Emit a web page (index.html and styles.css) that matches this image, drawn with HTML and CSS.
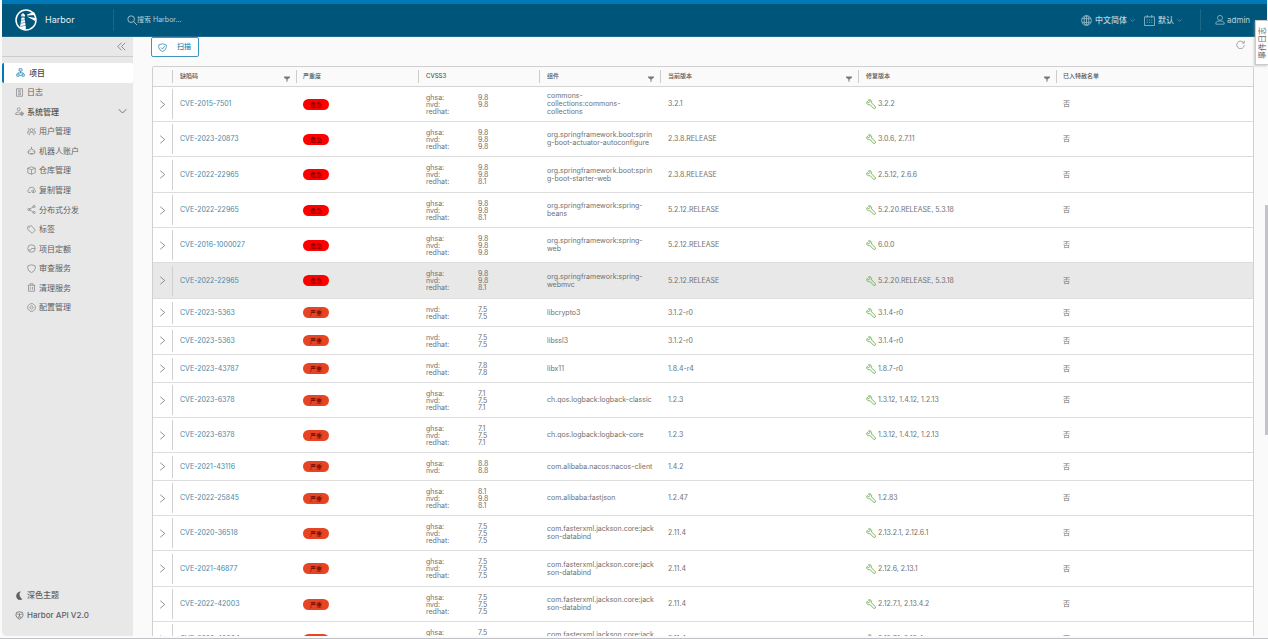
FILE: index.html
```html
<!DOCTYPE html>
<html lang="zh-CN">
<head>
<meta charset="utf-8">
<title>Harbor</title>
<link rel="stylesheet" href="styles.css">
</head>
<body>
<svg class="sprite" aria-hidden="true">
  <symbol id="wrench" viewBox="0 0 36 36"><path d="M4 9C0 16 6 23 14 20L26 32Q30 36 33 33Q36 29 32 26L20 14C22 6 16 1 9 3L14 9L10 14Z"/></symbol>
  <symbol id="filter" viewBox="0 0 12 12"><path d="M0 1h12v2L7 7v4l-2 1V7L0 3z"/></symbol>
  <symbol id="chevron" viewBox="0 0 12 12"><path d="M3 1l6 5-6 5"/></symbol>
  <symbol id="down" viewBox="0 0 12 12"><path d="M1 3l5 5 5-5"/></symbol>
</svg>
<header class="topbar">
  <a class="brand" href="#">
    <svg class="logo" viewBox="0 0 44 44"><circle cx="22" cy="22" r="20"/><path class="solid" d="M12 12l4-4 4 4v3h-8zM13 17h6l3 22-4 3-8-5zM24 11l14-5 3 6-17 1zM24 15l17 3-1 6z"/><path class="gap" d="M12 23l9-2M11 29l11-3M11 35l12-3M14 12v5"/></svg>
    <span>Harbor</span>
  </a>
  <label class="search"><svg class="ico" viewBox="0 0 12 12"><circle cx="5" cy="5" r="4"/><path d="M8 8l4 4"/></svg><input type="text" placeholder="搜索 Harbor..." aria-label="搜索"></label>
  <div class="tools">
    <button class="tool lang"><svg class="ico" viewBox="0 0 12 12"><circle cx="6" cy="6" r="5.3"/><ellipse cx="6" cy="6" rx="2.5" ry="5.3"/><path d="M1 4h10M1 8h10M6 1v10"/></svg>中文简体<svg class="caret"><use href="#down"/></svg></button>
    <button class="tool date"><svg class="ico" viewBox="0 0 12 12"><path d="M.5 2h11v9.500H.5zM3.500 0v3M8.500 0v3M3 5.500h1M5.500 5.500h1M8 5.500h1M3 8h1M5.500 8h1M8 8h1"/></svg>默认<svg class="caret"><use href="#down"/></svg></button>
    <button class="tool user"><svg class="ico" viewBox="0 0 12 12"><circle cx="6" cy="3.500" r="3"/><path d="M1 11V9q2-2 5-2t5 2v2z"/></svg>admin</button>
  </div>
</header>
<div class="shell">
  <aside class="sidebar">
    <button class="collapse" aria-label="收起"><svg viewBox="0 0 12 12"><path d="M6 1L1 6l5 5M11 1L6 6l5 5"/></svg></button>
    <nav class="menu" id="menu"></nav>
    <div class="extras">
      <button class="link"><svg class="ico moon" viewBox="0 0 12 12"><path d="M7 1Q3 5 9 11Q3 13 2 7Q2 2 7 1z"/></svg>深色主题</button>
      <a class="link" href="#"><svg class="ico" viewBox="0 0 12 12"><path d="M2 2q4-2 8 0 2 4-1 7l-3 2-3-2Q0 6 2 2zM3 4l2 1M7 5l2-1M4 8h4M6 3v4"/></svg>Harbor API V2.0</a>
    </div>
  </aside>
  <main class="content">
    <div class="actions">
      <button class="scan"><svg viewBox="0 0 12 12"><path d="M6 1l5 1.500V6q-1 4-5 5.500Q2 10 1 6V2.500zM4 6l2 2 3-4"/></svg>扫描</button>
      <button class="refresh" aria-label="刷新"><svg viewBox="0 0 12 12"><path d="M10 3.500A5 5 0 1 0 11 7M11 1v3H8"/></svg></button>
    </div>
    <div class="grid">
      <table>
        <colgroup><col class="c-exp"><col class="c-id"><col class="c-sev"><col class="c-cvss"><col class="c-pkg"><col class="c-ver"><col class="c-ver"><col></colgroup>
        <thead><tr id="head"></tr></thead>
        <tbody id="rows"></tbody>
      </table>
    </div>
  </main>
</div>
<button class="events"><span>事件日志</span></button>
<div class="scroll-thumb"></div>
<div class="bottom-edge"></div>
<script src="app.js"></script>
</body>
</html>
```
FILE: styles.css
```css
* { box-sizing: border-box; }
html, body { height: 100%; margin: 0; }
body {
  display: flex;
  flex-direction: column;
  overflow: hidden;
  padding: 0 1px 3px 2px;
  background: #fafafa;
  color: #707070;
  font: 7px/8px Inter, "Noto Sans CJK SC", sans-serif;
}
button, input { font: inherit; color: inherit; background: none; border: 0; padding: 0; margin: 0; }
a { color: inherit; text-decoration: none; }
svg { fill: none; stroke: currentColor; flex: none; }
.sprite { position: absolute; width: 0; height: 0; }
.ico { width: 10px; height: 10px; stroke-width: 1; }

.topbar {
  display: flex;
  align-items: center;
  flex: none;
  height: 37px;
  border-top: 4px solid #0079b8;
  background: #00567a;
  border-bottom: 1px solid #20698a;
  color: #b9d0da;
  font-size: 8px;
}
.brand { display: flex; align-items: center; gap: 8px; width: 111px; padding-left: 13px; font-size: 9px; color: #e4eef2; }
.logo { width: 22px; height: 22px; stroke: #fff; stroke-width: 3; }
.logo .solid { fill: #fff; stroke: none; }
.logo .gap { stroke: #00567a; stroke-width: 1; }
.search { display: flex; align-items: center; flex: 1; height: 22px; padding-left: 13px; border-left: 1px solid #1c6687; }
.search input { width: 100px; outline: 0; font-size: 7px; }
.search input::placeholder { color: #b4cdd8; }
.tools { display: flex; align-items: center; height: 22px; }
.tool { display: flex; align-items: center; gap: 3px; height: 22px; font-size: 8px; }
.tool .ico { color: #8fb4c5; }
.lang, .date { margin-right: 9px; font-weight: 500; }
.tool.lang .ico, .tool.date .ico { width: 11px; height: 11px; }
.tool .caret { width: 5px; height: 5px; stroke-width: 1; }
.date { margin-right: 18px; }
.user { width: 67px; padding-left: 14px; gap: 2px; border-left: 1px solid #1c6687; }

.shell { display: flex; flex: 1; min-height: 0; }
.sidebar { display: flex; flex-direction: column; flex: none; width: 131px; background: #e8e8e8; border-bottom-left-radius: 5px; }
.collapse { display: flex; justify-content: flex-end; align-items: center; height: 20px; padding-right: 7px; border-bottom: 1px solid #ccc; }
.collapse svg { width: 9px; height: 9px; stroke-width: 1; }
.menu { display: grid; grid-auto-rows: 1fr; height: 254px; margin-top: 6px; }
.item { display: flex; align-items: center; gap: 3px; padding: 0 6px 0 13px; font-size: 8px; color: #606060; }
.item .ico { width: 9px; height: 9px; color: #888; }
.item.sub { padding-left: 25px; }
.item.group { font-weight: 500; color: #505050; }
.item.active { padding-left: 12px; gap: 4px; border-left: 2px solid #0079b8; border-radius: 2px; background: #fff; color: #444; font-weight: 500; }
.item.active .ico { color: #2585b5; }
.item .toggle { width: 9px; height: 9px; margin-left: auto; stroke-width: 1; }
.extras { margin-top: auto; margin-bottom: 11px; }
.link { display: flex; align-items: center; gap: 3px; width: 100%; height: 20px; padding-left: 13px; font-size: 8px; font-weight: 500; color: #606060; }
.link .ico { width: 9px; height: 9px; }
.moon { fill: currentColor; }

.content { display: flex; flex-direction: column; flex: 1; min-width: 0; padding: 0 13px 0 18px; }
.actions { display: flex; justify-content: space-between; align-items: flex-start; height: 29px; }
.scan { display: flex; align-items: center; gap: 10px; width: 48px; height: 20px; padding-left: 6px; border: 1px solid #3f94bd; border-radius: 2px; background: #fff; color: #2585b5; font-weight: 500; }
.scan svg { width: 9px; height: 9px; }
.refresh { display: flex; margin: 3px 9px 0 0; color: #888; }
.refresh svg { width: 9px; height: 9px; }

.grid { flex: 1; min-height: 0; overflow: hidden; margin-left: 1px; border: 1px solid #d0d0d0; border-bottom: 0; border-radius: 2px 2px 0 0; background: #fff; }
table { width: 100%; table-layout: fixed; border-collapse: separate; border-spacing: 0; }
.c-exp { width: 20px; }
.c-id { width: 124px; }
.c-sev { width: 122px; }
.c-cvss, .c-pkg { width: 121px; }
.c-ver { width: 18%; }
th { height: 20px; padding: 0; border-bottom: 1px solid #d4d4d4; background: #fafafa; text-align: left; font-size: 6px; font-weight: 500; color: #555; }
.th { display: flex; justify-content: space-between; height: 13px; padding: 2px 6px 0 7px; border-right: 1px solid #ccc; }
th:nth-child(3) .th, th:last-child .th { padding-left: 6px; }
th:last-child .th { border-right: 0; }
.th svg { width: 6px; height: 6px; margin-top: 4px; fill: #777; stroke: none; }
td { height: 35px; padding: 0 7px; border-bottom: 1px solid #ddd; vertical-align: middle; }
tr:nth-child(3n) td { height: 36px; }
tr.short td { height: 28px; }
tr.hover td { background: #e8e8e8; }
tr td:first-child { padding: 0; }
td:nth-child(3), td:nth-child(8) { padding-left: 6px; }
.expand { display: flex; align-items: center; justify-content: center; width: 20px; height: 30px; border-right: 1px solid #d0d0d0; }
.short .expand { height: 22px; }
.expand svg { width: 9px; height: 9px; stroke-width: 1; }
.cve { color: #4a87a5; }
.badge { display: block; width: 26px; height: 11px; border-radius: 6px; background: #f00; color: #500; font-size: 6px; line-height: 11px; text-align: center; }
.badge.high { background: #e64524; }
.cvss { display: grid; grid-template-columns: 52px 1fr; line-height: 7px; }
.pkg { overflow-wrap: anywhere; }
.fix { display: flex; align-items: center; gap: 2px; }
.fix svg { width: 10px; height: 10px; stroke: #60a840; stroke-width: 3; }

.events { position: absolute; right: 0; top: 20px; display: flex; align-items: center; justify-content: center; width: 13px; height: 45px; border: 1px solid #ccc; border-right: 0; background: #fff; box-shadow: -1px 1px 2px #9998; color: #666; font-size: 8px; }
.events span { writing-mode: vertical-rl; text-orientation: sideways; transform: rotate(180deg); }
.scroll-thumb { position: absolute; right: 0; top: 205px; width: 3px; height: 230px; background: #c4c4c8; }
.bottom-edge { position: absolute; left: 0; right: 0; bottom: 0; height: 2px; border-bottom: 1px solid #c0c0c6; }
```
FILE: app.js
```js
const icons = {
  project: 'M4 1h4v3H4zM1 8h3v3H1zM8 8h3v3H8zM6 4v3M2.500 8V6.500h7V8M4.500 10h3',
  log: 'M2 1h8v10H2zM4 3h4M4 5h4M4 7h4M4 9h4',
  admin: 'M3 3a2 2 0 1 0 4 0a2 2 0 1 0-4 0M1 10V8q2-2 5-1M1 10h5M7 9a2 2 0 1 0 4 0a2 2 0 1 0-4 0M9 6v6M6 9h6',
  users: 'M4 4a2 2 0 1 0 4 0a2 2 0 1 0-4 0M3 11V8q3-2 6 0v3M1 2l2 1-1 2M11 2L9 3l1 2M1 9V6h2M11 9V6H9',
  robot: 'M6 1v3M2 6q4-4 8 0v4q-4 2-8 0zM0 7v2M12 7v2M4 7v1M8 7v1M4 10h4',
  box: 'M6 1l5 2v6l-5 2-5-2V3zM1 3l5 2 5-2M6 5v6',
  copy: 'M5 10H2Q0 8 2 6q1-4 5-3 3 0 3 3 3 2 0 4H7M5 8h4L7.500 6M9 8L7.500 10',
  share: 'M3 6l6-4M3 6l6 4M1 6a1.500 1.500 0 1 0 3 0a1.500 1.500 0 1 0-3 0M8 2a1.500 1.500 0 1 0 3 0a1.500 1.500 0 1 0-3 0M8 10a1.500 1.500 0 1 0 3 0a1.500 1.500 0 1 0-3 0',
  tag: 'M1 2l5-1 5 6-4 4-6-5zM3 3.500h1',
  quota: 'M1 6a5 5 0 1 0 10 0a5 5 0 1 0-10 0M2 8h3l1-2h5',
  shield: 'M6 1l5 1.500V6q-1 4-5 5.500Q2 10 1 6V2.500z',
  trash: 'M1 3h10M4 3V1h4v2M2 3v8h8V3M4.500 5v4M7.500 5v4',
  gear: 'M4 1h4l3 3v4l-3 3H4L1 8V4zM4 6a2 2 0 1 0 4 0a2 2 0 1 0-4 0'
};
const menu = [
  ['project', '项目', 'active'], ['log', '日志', ''], ['admin', '系统管理', 'group'],
  ['users', '用户管理', 'sub'], ['robot', '机器人账户', 'sub'], ['box', '仓库管理', 'sub'],
  ['copy', '复制管理', 'sub'], ['share', '分布式分发', 'sub'], ['tag', '标签', 'sub'],
  ['quota', '项目定额', 'sub'], ['shield', '审查服务', 'sub'], ['trash', '清理服务', 'sub'], ['gear', '配置管理', 'sub']
];
const use = (id) => `<svg><use href="#${id}"/></svg>`;
document.getElementById('menu').innerHTML = menu.map(([icon, text, cls]) =>
  `<a href="#" class="item ${cls}"><svg class="ico" viewBox="0 0 12 12"><path d="${icons[icon]}"/></svg>${text}${cls === 'group' ? '<svg class="toggle"><use href="#down"/></svg>' : ''}</a>`).join('');

const heads = [['', 0], ['缺陷码', 1], ['严重度', 0], ['CVSS3', 0], ['组件', 1], ['当前版本', 1], ['修复版本', 1], ['已入特赦名单', 0]];
document.getElementById('head').innerHTML = heads.map(([t, f]) =>
  `<th><div class="th"><span>${t}</span>${f ? use('filter') : ''}</div></th>`).join('');

const rows = [
  ['2015-7501', 'ghsa 9.8,nvd 9.8,redhat ', 'commons-collections:commons-collections', '3.2.1', '3.2.2'],
  ['2023-20873', 'ghsa 9.8,nvd 9.8,redhat 9.8', 'org.springframework.boot:spring-boot-actuator-autoconfigure', '2.3.8.RELEASE', '3.0.6, 2.7.11'],
  ['2022-22965', 'ghsa 9.8,nvd 9.8,redhat 8.1', 'org.springframework.boot:spring-boot-starter-web', '2.3.8.RELEASE', '2.5.12, 2.6.6'],
  ['2022-22965', 'ghsa 9.8,nvd 9.8,redhat 8.1', 'org.springframework:spring-beans', '5.2.12.RELEASE', '5.2.20.RELEASE, 5.3.18'],
  ['2016-1000027', 'ghsa 9.8,nvd 9.8,redhat 9.8', 'org.springframework:spring-web', '5.2.12.RELEASE', '6.0.0'],
  ['2022-22965', 'ghsa 9.8,nvd 9.8,redhat 8.1', 'org.springframework:spring-webmvc', '5.2.12.RELEASE', '5.2.20.RELEASE, 5.3.18'],
  ['2023-5363', 'nvd 7.5,redhat 7.5', 'libcrypto3', '3.1.2-r0', '3.1.4-r0'],
  ['2023-5363', 'nvd 7.5,redhat 7.5', 'libssl3', '3.1.2-r0', '3.1.4-r0'],
  ['2023-43787', 'nvd 7.8,redhat 7.8', 'libx11', '1.8.4-r4', '1.8.7-r0'],
  ['2023-6378', 'ghsa 7.1,nvd 7.5,redhat 7.1', 'ch.qos.logback:logback-classic', '1.2.3', '1.3.12, 1.4.12, 1.2.13'],
  ['2023-6378', 'ghsa 7.1,nvd 7.5,redhat 7.1', 'ch.qos.logback:logback-core', '1.2.3', '1.3.12, 1.4.12, 1.2.13'],
  ['2021-43116', 'ghsa 8.8,nvd 8.8', 'com.alibaba.nacos:nacos-client', '1.4.2', ''],
  ['2022-25845', 'ghsa 8.1,nvd 9.8,redhat 8.1', 'com.alibaba:fastjson', '1.2.47', '1.2.83'],
  ['2020-36518', 'ghsa 7.5,nvd 7.5,redhat 7.5', 'com.fasterxml.jackson.core:jackson-databind', '2.11.4', '2.13.2.1, 2.12.6.1'],
  ['2021-46877', 'ghsa 7.5,nvd 7.5,redhat 7.5', 'com.fasterxml.jackson.core:jackson-databind', '2.11.4', '2.12.6, 2.13.1'],
  ['2022-42003', 'ghsa 7.5,nvd 7.5,redhat 7.5', 'com.fasterxml.jackson.core:jackson-databind', '2.11.4', '2.12.7.1, 2.13.4.2'],
  ['2022-42004', 'ghsa 7.5,nvd 7.5,redhat 7.5', 'com.fasterxml.jackson.core:jackson-databind', '2.11.4', '2.12.7.1, 2.13.4']
];
document.getElementById('rows').innerHTML = rows.map(([id, scores, pkg, ver, fix], i) => {
  const list = scores.split(',').map((s) => s.split(' '));
  const cls = (list.length < 3 ? 'short ' : '') + (i === 5 ? 'hover' : '');
  return `<tr class="${cls}"><td><button class="expand" aria-label="展开">${use('chevron')}</button></td>
<td><a class="cve" href="#">CVE-${id}</a></td>
<td><span class="badge ${i > 5 ? 'high' : ''}">${i > 5 ? '严重' : '危急'}</span></td>
<td><div class="cvss">${list.map(([k, v]) => `<span>${k}:</span><span>${v}</span>`).join('')}</div></td>
<td><div class="pkg">${pkg}</div></td><td>${ver}</td>
<td>${fix ? `<div class="fix">${use('wrench')}${fix}</div>` : ''}</td><td>否</td></tr>`;
}).join('');
```
